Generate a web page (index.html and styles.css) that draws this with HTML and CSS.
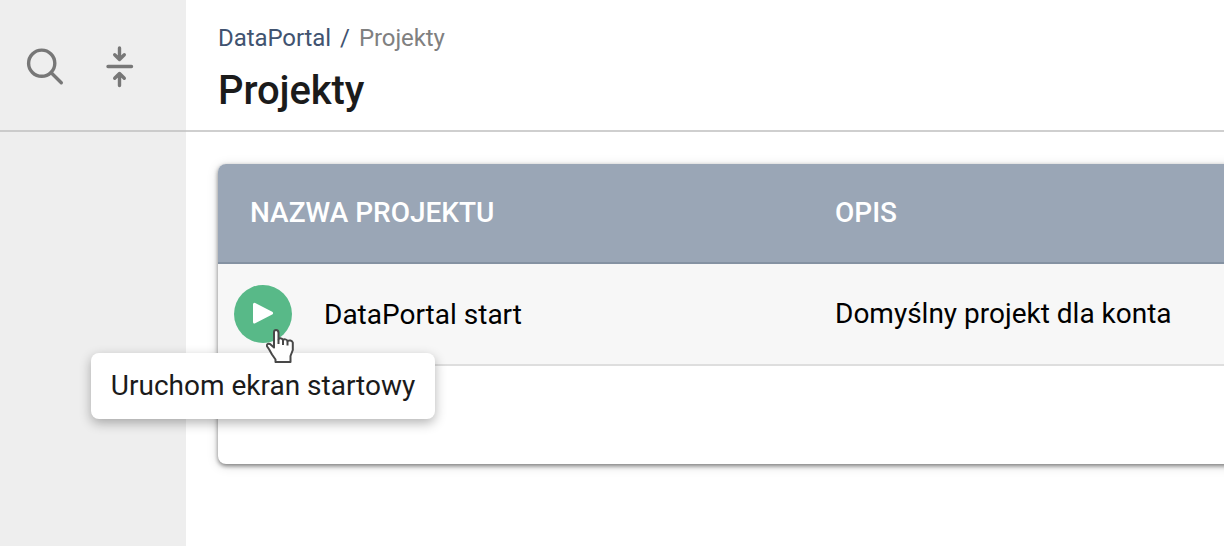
FILE: index.html
```html
<!DOCTYPE html>
<html lang="pl">
<head>
  <meta charset="UTF-8">
  <meta name="viewport" content="width=device-width, initial-scale=1.0">
  <title>DataPortal - Projekty</title>
  <link rel="stylesheet" href="styles.css">
</head>
<body>
  <aside class="sidebar">
    <div class="sidebar-tools">
      <button class="tool-button" aria-label="Szukaj">
        <svg width="40" height="40" viewBox="0 0 40 40">
          <circle cx="16.7" cy="16.2" r="13.1" />
          <path d="M26.2 25.7L36.3 35.7" />
        </svg>
      </button>
      <button class="tool-button" aria-label="Zwiń">
        <svg width="30" height="44" viewBox="0 0 30 44">
          <path d="M3 21.5H26.5M14.5 3V14.5M9.7 9.7L14.5 14.5L19.3 9.7M14.5 40.5V28.5M9.7 33.3L14.5 28.5L19.3 33.3" />
        </svg>
      </button>
    </div>
  </aside>

  <main class="content">
    <header class="page-header">
      <nav class="breadcrumb">
        <a class="breadcrumb-link" href="#">DataPortal</a>
        <span class="breadcrumb-separator">/</span>
        <span class="breadcrumb-current">Projekty</span>
      </nav>
      <h1 class="page-title">Projekty</h1>
    </header>

    <section class="projects">
      <div class="projects-row projects-head">
        <div class="col-name">Nazwa projektu</div>
        <div class="col-description">Opis</div>
      </div>
      <div class="projects-row projects-item">
        <div class="col-name">
          <button class="start-button" aria-label="Uruchom ekran startowy">
            <svg width="58" height="58" viewBox="0 0 58 58">
              <path d="M20.5 19.3L37.5 28.2L20.5 37Z" />
            </svg>
          </button>
          <span class="project-name">DataPortal start</span>
          <div class="tooltip">Uruchom ekran startowy</div>
          <!-- Hand pointer -->
          <svg class="pointer" width="32" height="36" viewBox="0 0 32 36">
            <path d="M10.5 34V31.5L7 26.5L4.2 21.5L2 18.2C1.4 16.5 3 15.2 5 16L9 19.5V4.5C9 1.3 13 1.3 13.5 4.5V11.5C14 9.8 17 10 17.8 12C19 10.8 21.8 11.2 22.5 13C24.3 11.8 27 12.5 27.8 14.5V22L25.5 28V34Z" />
            <path d="M13.5 11.5V16M18 12V17M22.5 13V17.5" />
          </svg>
        </div>
        <div class="col-description">Domyślny projekt dla konta</div>
      </div>
      <div class="projects-footer"></div>
    </section>
  </main>
</body>
</html>
```
FILE: styles.css
```css
* {
  margin: 0;
  padding: 0;
  box-sizing: border-box;
}
body {
  display: flex;
  height: 100vh;
  overflow: hidden;
  font-family: Roboto, sans-serif;
  font-size: 28px;
  color: #000;
  background: #fff;
}
button {
  border: none;
  background: none;
  cursor: pointer;
}
svg {
  display: block;
}
.sidebar {
  flex: 0 0 186px;
  background: #eee;
}
.sidebar-tools {
  display: flex;
  align-items: flex-start;
  gap: 40px;
  height: 132px;
  padding: 45px 0 0 25px;
  border-bottom: 2px solid #cbcbcb;
}
.tool-button svg {
  fill: none;
  stroke: #777;
  stroke-width: 3.4;
  stroke-linecap: round;
  stroke-linejoin: round;
}
.tool-button:first-child {
  padding-top: 2px;
}
.content {
  flex: 1;
  min-width: 0;
}
.page-header {
  height: 132px;
  padding: 22px 0 0 32px;
  border-bottom: 2px solid #cfcfcf;
}
.breadcrumb {
  display: flex;
  gap: 9px;
  font-size: 24px;
  line-height: 32px;
  letter-spacing: -0.08px;
  color: #415370;
}
.breadcrumb-link {
  color: inherit;
  text-decoration: none;
}
.breadcrumb-current {
  color: #808080;
}
.page-title {
  margin-top: 13px;
  font-size: 40px;
  line-height: 48px;
  font-weight: 500;
  letter-spacing: -0.1px;
  color: #1b1b1b;
}
.projects {
  margin: 32px -16px 0 32px;
  border-radius: 8px 0 0 8px;
  background: #fff;
  box-shadow: 0 2px 4px rgba(0, 0, 0, 0.45), 0 2px 12px rgba(0, 0, 0, 0.15);
}
.projects-row {
  display: flex;
  align-items: center;
}
.projects-head {
  height: 100px;
  padding-bottom: 2px;
  border-bottom: 2px solid #8592a2;
  border-radius: 8px 0 0 0;
  background: #9aa6b6;
  color: #fff;
  font-weight: 500;
  text-transform: uppercase;
}
.projects-item {
  height: 102px;
  border-bottom: 2px solid #dedede;
  background: #f7f7f7;
}
.projects-item .col-description {
  padding-bottom: 2px;
}
.projects-footer {
  height: 98px;
}
.col-name {
  position: relative;
  display: flex;
  align-items: center;
  flex: 0 0 617px;
  padding-left: 32px;
}
.projects-item .col-name {
  gap: 32px;
  padding-left: 16px;
}
.start-button {
  width: 58px;
  height: 58px;
  border-radius: 50%;
  background: #58b988;
}
.start-button path {
  fill: #fff;
  stroke: #fff;
  stroke-width: 3;
  stroke-linejoin: round;
}
.tooltip {
  position: absolute;
  top: 68px;
  left: -127px;
  width: 344px;
  height: 66px;
  border-radius: 8px;
  background: #fff;
  color: #1b1b1b;
  line-height: 66px;
  text-align: center;
  white-space: nowrap;
  box-shadow: 0 4px 12px rgba(0, 0, 0, 0.3);
}
.pointer {
  position: absolute;
  top: 43px;
  left: 47px;
  fill: #fff;
  stroke: #484848;
  stroke-width: 2;
  stroke-linejoin: round;
}
```
